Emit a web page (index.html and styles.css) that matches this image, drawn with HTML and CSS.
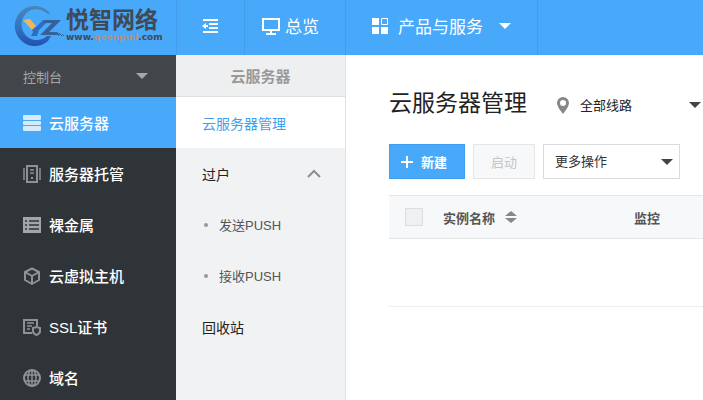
FILE: index.html
```html
<!DOCTYPE html>
<html lang="zh-CN">
<head>
  <meta charset="UTF-8">
  <meta name="viewport" content="width=device-width, initial-scale=1.0">
  <title>云服务器管理</title>
  <link rel="stylesheet" href="styles.css">
</head>
<body>
  <header class="topbar">
    <a href="#" class="logo">
      <svg class="logo-mark" viewBox="0 0 50 42" width="50" height="42">
        <defs>
          <linearGradient id="ring" x1="0" y1="0" x2="0" y2="1">
            <stop offset="0" stop-color="#4b86b8"/>
            <stop offset="0.5" stop-color="#3276c4"/>
            <stop offset="1" stop-color="#2450b0"/>
          </linearGradient>
        </defs>
        <path d="M36 7A20 20 0 1 0 34 35L37 30H33A15 15 0 0 1 10 27A16 16 0 0 1 17 4A18 18 0 0 1 34 8Z" fill="url(#ring)"/>
        <path d="M9 14L16 13L22 20L18 24Z" fill="#efb55f"/>
        <path d="M18 24L23 20L29 14H35L25 24L23 30H17L19 26Z" fill="#2d6cbf"/>
        <path d="M31 14H47L35 26H43L46 29H26L38 17H30Z" fill="#35619b"/>
        <path d="M42 26L45 30M45 27L48 30M48 28L50 30" stroke="#3a5f91" stroke-width="1"/>
      </svg>
      <span class="logo-text">
        <span class="logo-name">悦智网络</span>
        <span class="logo-url">www.<em>qeonpud</em>.com</span>
      </span>
    </a>
    <button type="button" class="top-item fold" aria-label="收起菜单">
      <svg viewBox="0 0 16 14" width="16" height="14" fill="#fff">
        <path d="M1 0H16V2H1ZM7 4H16V6H7ZM7 8H16V10H7ZM1 12H16V14H1ZM0 7L4 4V6H6V8H4V10Z"/>
      </svg>
    </button>
    <a href="#" class="top-item overview">
      <svg viewBox="0 0 18 18" width="18" height="18" fill="none" stroke="#fff" stroke-width="2">
        <path d="M1 2H17V13H1ZM9 13V16M4 17H14"/>
      </svg>
      <span>总览</span>
    </a>
    <button type="button" class="top-item products">
      <svg viewBox="0 0 16 16" width="16" height="16" fill="#fff">
        <path d="M0 0H7V7H0ZM0 9H7V16H0ZM9 9H16V16H9Z"/>
        <path d="M9.500 0.500H15.500V6.500H9.500Z" fill="none" stroke="#fff"/>
      </svg>
      <span>产品与服务</span>
      <i class="caret"></i>
    </button>
  </header>

  <div class="layout">
    <nav class="sidebar">
      <button type="button" class="side-head"><span>控制台</span><i class="caret"></i></button>
      <a href="#" class="side-item active">
        <svg viewBox="0 0 18 18" width="18" height="18" fill="#d3eaff">
          <rect y="1" width="18" height="5" rx="1"/><rect y="7" width="18" height="4" rx="1"/><rect y="12" width="18" height="5" rx="1"/>
        </svg>
        <span>云服务器</span>
      </a>
      <a href="#" class="side-item">
        <svg viewBox="0 0 18 18" width="18" height="18" fill="none" stroke="#8f9294" stroke-width="2">
          <path d="M4 1H14V17H4Z"/><path d="M1 3V15M17 3V15M7 5H11M7 8H11" stroke-width="1.500"/><path d="M8 13H10"/>
        </svg>
        <span>服务器托管</span>
      </a>
      <a href="#" class="side-item">
        <svg viewBox="0 0 18 18" width="18" height="18">
          <rect y="1" width="18" height="16" fill="#a3a6a8"/>
          <path d="M2 5H4M6 5H16M2 9H4M6 9H16M2 13H4M6 13H16" stroke="#2f3438" stroke-width="1.500"/>
        </svg>
        <span>裸金属</span>
      </a>
      <a href="#" class="side-item">
        <svg viewBox="0 0 18 18" width="18" height="18" fill="none" stroke="#8f9294" stroke-width="2" stroke-linejoin="round">
          <path d="M9 1.500L16 5V13L9 17L2 13V5ZM2 5L9 9L16 5M9 9V17"/>
        </svg>
        <span>云虚拟主机</span>
      </a>
      <a href="#" class="side-item">
        <svg viewBox="0 0 18 18" width="18" height="18" fill="none" stroke="#8f9294" stroke-width="2">
          <path d="M14 8V2H1V15H9"/><path d="M4 5H11M4 8H9M4 11H7" stroke-width="1.500"/><path d="M10 10L13.500 9L17 10V13C17 15 15 16.500 13.500 17C12 16.500 10 15 10 13Z" stroke-width="2"/>
        </svg>
        <span>SSL证书</span>
      </a>
      <a href="#" class="side-item">
        <svg viewBox="0 0 18 18" width="18" height="18" fill="none" stroke="#8f9294" stroke-width="1.500">
          <circle cx="9" cy="9" r="8" stroke-width="2"/><ellipse cx="9" cy="9" rx="4" ry="8"/><path d="M9 1V17M2 6H16M2 12H16"/>
        </svg>
        <span>域名</span>
      </a>
    </nav>

    <nav class="submenu">
      <h2 class="sub-head">云服务器</h2>
      <a href="#" class="sub-item current">云服务器管理</a>
      <button type="button" class="sub-item">
        <span>过户</span>
        <svg viewBox="0 0 14 9" width="14" height="9" fill="none" stroke="#8c8e90" stroke-width="2"><path d="M1 8L7 2L13 8"/></svg>
      </button>
      <a href="#" class="sub-item child">发送PUSH</a>
      <a href="#" class="sub-item child">接收PUSH</a>
      <a href="#" class="sub-item">回收站</a>
    </nav>

    <main class="content">
      <div class="title-row">
        <h1>云服务器管理</h1>
        <label class="line-pick" for="line">
          <svg viewBox="0 0 14 18" width="14" height="18" fill="#858789">
            <path fill-rule="evenodd" d="M7 1A6 6 0 0 0 1 7C1 11 7 18 7 18S13 11 13 7A6 6 0 0 0 7 1ZM7 4A3 3 0 1 1 7 10A3 3 0 0 1 7 4Z"/>
          </svg>
        </label>
        <div class="select-wrap line-select">
          <select id="line" aria-label="线路"><option>全部线路</option></select>
          <i class="caret dark"></i>
        </div>
      </div>

      <div class="toolbar">
        <button type="button" class="btn primary">
          <svg viewBox="0 0 12 12" width="12" height="12" stroke="#fff" stroke-width="2"><path d="M6 0V12M0 6H12"/></svg>
          <span>新建</span>
        </button>
        <button type="button" class="btn" disabled>启动</button>
        <div class="select-wrap more-select">
          <select aria-label="更多操作"><option>更多操作</option></select>
          <i class="caret dark"></i>
        </div>
      </div>

      <table class="list">
        <thead>
          <tr>
            <th class="col-check"><input type="checkbox" aria-label="全选"></th>
            <th class="col-name">
              <span class="sort">实例名称
                <svg viewBox="0 0 12 12" width="12" height="12" fill="#858789"><path d="M6 0L12 5H0ZM0 7H12L6 12Z"/></svg>
              </span>
            </th>
            <th>监控</th>
          </tr>
        </thead>
        <tbody>
          <tr><td colspan="3"></td></tr>
        </tbody>
      </table>
    </main>
  </div>
</body>
</html>
```
FILE: styles.css
```css
* {
  box-sizing: border-box;
}

body {
  margin: 0;
  min-height: 100vh;
  display: flex;
  flex-direction: column;
  background: #fff;
  color: #222;
  font-family: "Liberation Sans", "Noto Sans CJK SC", sans-serif;
  font-size: 13px;
  overflow: hidden;
}

a {
  color: inherit;
  text-decoration: none;
}

button {
  border: 0;
  padding: 0;
  background: none;
  color: inherit;
  font: inherit;
  cursor: pointer;
}

svg {
  display: block;
  flex-shrink: 0;
}

.caret {
  border: 6px solid transparent;
  border-top-color: currentColor;
  border-bottom: 0;
}

.caret.dark {
  color: #444;
}

/* top bar */
.topbar {
  display: flex;
  height: 55px;
  background: #48a8fa;
  color: #fff;
  font-size: 17px;
}

.logo {
  display: flex;
  align-items: center;
  gap: 2px;
  width: 176px;
  padding: 0 0 2px 14px;
}

.logo-text {
  display: flex;
  flex-direction: column;
  padding-bottom: 4px;
  color: #3f4a55;
  font-weight: bold;
}

.logo-name {
  font-size: 23px;
  line-height: 24px;
}

.logo-url {
  font-family: "DejaVu Sans", sans-serif;
  font-size: 9px;
  line-height: 10px;
}

.logo-url em {
  color: #b98f80;
  font-style: normal;
}

.top-item {
  display: flex;
  align-items: center;
  padding-bottom: 4px;
  border-left: 1px solid #429ce9;
}

.fold {
  width: 68px;
  padding-left: 25px;
}

.overview {
  width: 101px;
  padding-left: 17px;
  gap: 5px;
}

.products {
  padding: 0 26px 4px;
  gap: 10px;
  border-right: 1px solid #429ce9;
}

.products .caret {
  margin-left: 6px;
}

.layout {
  display: flex;
  flex: 1;
}

/* left menu */
.sidebar {
  display: flex;
  flex-direction: column;
  width: 176px;
  background: #2f3438;
  color: #fff;
}

.side-head {
  display: flex;
  align-items: center;
  justify-content: space-between;
  height: 42px;
  padding: 0 28px 0 23px;
  background: #42464a;
  color: #a5a8aa;
}

.side-item {
  display: flex;
  align-items: center;
  gap: 8px;
  height: 51px;
  padding-left: 23px;
  font-size: 15px;
  font-weight: 500;
}

.side-item.active {
  background: #48a8fa;
}

/* second level menu */
.submenu {
  display: flex;
  flex-direction: column;
  width: 170px;
  background: #f0f2f4;
  border-right: 1px solid #e0e2e4;
}

.sub-head {
  margin: 0;
  height: 42px;
  border-bottom: 1px solid #dddfe1;
  background: #eeeff1;
  color: #999;
  font-size: 15px;
  line-height: 44px;
  text-align: center;
}

.sub-item {
  display: flex;
  align-items: center;
  justify-content: space-between;
  height: 51px;
  padding: 0 24px 0 26px;
  font-size: 14px;
}

.sub-item.current {
  background: #fff;
  color: #3f9fee;
}

.sub-item.child {
  justify-content: flex-start;
  gap: 11px;
  padding-left: 28px;
  color: #555;
  font-size: 13px;
}

.child::before {
  content: "";
  width: 4px;
  height: 4px;
  border-radius: 50%;
  background: #999;
}

/* content */
.content {
  flex: 1;
  min-width: 0;
  padding: 30px 0 0 43px;
}

.title-row {
  display: flex;
  align-items: center;
  height: 36px;
}

h1 {
  margin: 0;
  font-size: 23px;
  font-weight: normal;
  line-height: 36px;
  white-space: nowrap;
}

.line-pick {
  margin: 4px 10px 0 29px;
}

.select-wrap {
  position: relative;
}

.select-wrap select {
  appearance: none;
  width: 100%;
  height: 100%;
  border: 0;
  padding: 0;
  background: none;
  color: inherit;
  font: inherit;
}

.select-wrap .caret {
  position: absolute;
  right: 6px;
  top: 50%;
  margin-top: -3px;
  pointer-events: none;
}

.line-select {
  flex: 1;
  height: 24px;
  margin-top: 4px;
}

.line-select .caret {
  right: 2px;
}

.toolbar {
  display: flex;
  gap: 8px;
  height: 35px;
  margin: 23px 0 16px;
}

.btn {
  display: flex;
  align-items: center;
  justify-content: center;
  gap: 8px;
  width: 62px;
  border: 1px solid #e4e6e8;
  background: #f7f8fa;
  color: #c4c6c8;
}

.btn.primary {
  justify-content: flex-start;
  width: 76px;
  padding-left: 11px;
  border-color: #3f9fee;
  background: #48a8fa;
  color: #fff;
  font-weight: bold;
}

.more-select {
  width: 137px;
  border: 1px solid #d9dbdd;
  padding-left: 11px;
  color: #333;
}

/* instance list */
.list {
  width: 100%;
  border-collapse: collapse;
  table-layout: fixed;
}

.list th {
  height: 43px;
  padding: 0;
  border: 1px solid #e4e6e8;
  border-width: 1px 0;
  background: #f7f8fa;
  color: #555;
  text-align: left;
}

.list td {
  height: 68px;
  padding: 0;
  border-bottom: 1px solid #eceef0;
}

.list .col-check {
  width: 54px;
  padding-left: 16px;
}

.list .col-name {
  width: 191px;
}

.list input {
  display: block;
  appearance: none;
  width: 18px;
  height: 18px;
  margin: 0;
  border: 1px solid #dcdee0;
  background: #eff0f1;
}

.sort {
  display: flex;
  align-items: center;
  gap: 10px;
}
```
